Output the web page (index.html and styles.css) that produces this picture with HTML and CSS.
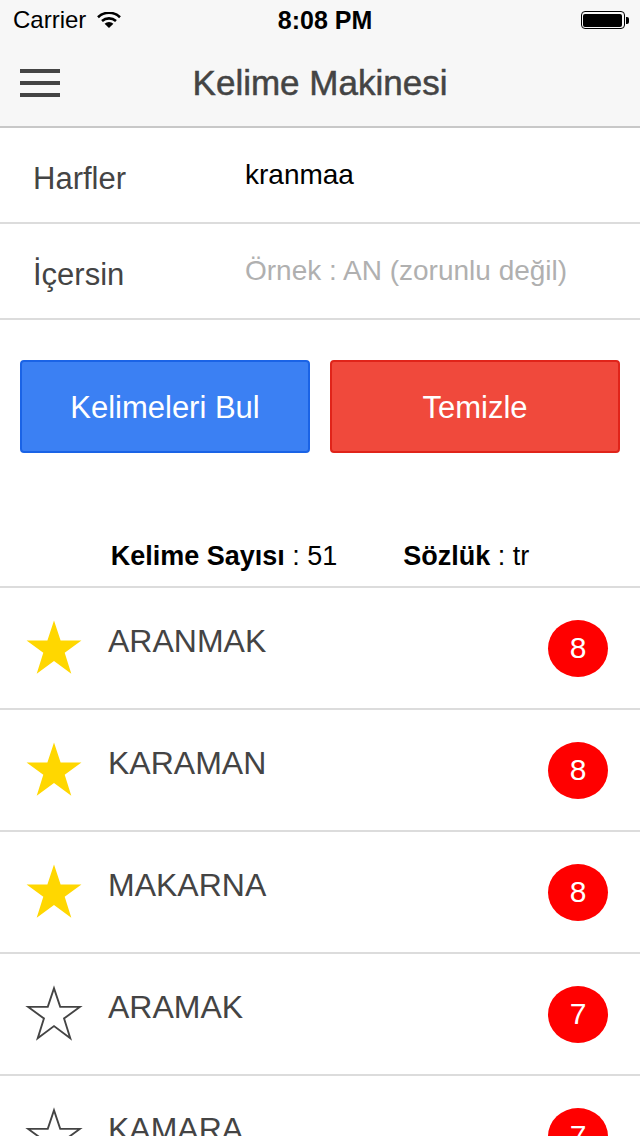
FILE: index.html
```html
<!DOCTYPE html>
<html lang="tr">
<head>
  <meta charset="UTF-8" />
  <meta name="viewport" content="width=device-width, initial-scale=1.0" />
  <title>Kelime Makinesi</title>
  <link rel="stylesheet" href="styles.css">
</head>
<body>
  <div class="statusbar">
    <div class="carrier">
      Carrier
      <svg class="wifi" width="24" height="16" viewBox="0 0 24 16">
        <path d="M1 5.2 A16 16 0 0 1 23 5.2" fill="none" stroke="#000" stroke-width="2.6" />
        <path d="M5 9 A10.5 10.5 0 0 1 19 9" fill="none" stroke="#000" stroke-width="2.6" />
        <path d="M12 16 L7.6 11.8 A6.4 6.4 0 0 1 16.4 11.8 Z" fill="#000" />
      </svg>
    </div>
    <div class="clock">8:08 PM</div>
    <div class="battery">
      <span class="battery-body"><span class="battery-fill"></span></span>
      <span class="battery-tip"></span>
    </div>
  </div>

  <header class="navbar">
    <div class="menu">
      <span></span><span></span><span></span>
    </div>
    <h1 class="title">Kelime Makinesi</h1>
    <div></div>
  </header>

  <form class="search">
    <label class="field">
      <span class="field-label">Harfler</span>
      <input class="field-input" type="text" value="kranmaa">
    </label>
    <label class="field">
      <span class="field-label">İçersin</span>
      <input class="field-input" type="text" placeholder="Örnek : AN (zorunlu değil)">
    </label>

    <div class="actions">
      <button type="button" class="btn btn-find">Kelimeleri Bul</button>
      <button type="button" class="btn btn-clear">Temizle</button>
    </div>
  </form>

  <div class="stats">
    <span><b>Kelime Sayısı</b> : 51</span>
    <span><b>Sözlük</b> : tr</span>
  </div>

  <ul class="words" id="words"></ul>

  <script>
    const words = [
      { word: 'ARANMAK', score: 8, fav: true },
      { word: 'KARAMAN', score: 8, fav: true },
      { word: 'MAKARNA', score: 8, fav: true },
      { word: 'ARAMAK', score: 7, fav: false },
      { word: 'KAMARA', score: 7, fav: false }
    ];
    const list = document.getElementById('words');
    const star = '<svg width="56" height="56" viewBox="0 0 100 100"><polygon points="50,1 61.8,36.5 99,36.5 69.1,58.5 80.9,96 50,73 19.1,96 30.9,58.5 1,36.5 38.2,36.5" /></svg>';

    words.forEach(w => {
      const li = document.createElement('li');
      li.className = 'word';
      li.innerHTML =
        `<span class="star ${w.fav ? 'star-on' : ''}">${star}</span>` +
        `<span class="word-text">${w.word}</span>` +
        `<span class="badge">${w.score}</span>`;
      list.appendChild(li);
    });
  </script>
</body>
</html>
```

FILE: styles.css
```css
body {
  font-family: 'Liberation Sans', Arial, sans-serif;
  background: #fff;
  margin: 0;
  height: 1136px;
  overflow: hidden;
}
.statusbar {
  height: 40px;
  background: #f7f7f7;
  display: flex;
  align-items: center;
  justify-content: space-between;
  padding: 0 11px 0 13px;
  font-size: 24px;
  color: #000;
}
.carrier {
  display: flex;
  align-items: center;
  gap: 11px;
  width: 160px;
}
.clock {
  font-weight: bold;
  font-size: 25px;
  margin-left: 8px;
}
.battery {
  width: 160px;
  display: flex;
  justify-content: flex-end;
  align-items: center;
}
.battery-body {
  width: 44px;
  height: 18px;
  box-sizing: border-box;
  border: 1.5px solid #000;
  border-radius: 4px;
  padding: 1.5px;
  display: flex;
}
.battery-fill {
  flex: 1;
  background: #000;
  border-radius: 2px;
}
.battery-tip {
  width: 3px;
  height: 7px;
  background: #000;
  border-radius: 0 2px 2px 0;
  margin-left: 1px;
}
.navbar {
  height: 86px;
  background: #f7f7f7;
  border-bottom: 2px solid #c8c8c8;
  display: grid;
  grid-template-columns: 120px 1fr 120px;
  align-items: center;
}
.menu {
  display: flex;
  flex-direction: column;
  gap: 8px;
  padding-left: 20px;
}
.menu span {
  display: block;
  width: 40px;
  height: 4px;
  background: #444;
}
.title {
  margin: 0;
  text-align: center;
  font-size: 35px;
  font-weight: normal;
  color: #444;
  -webkit-text-stroke: 0.5px #444;
}
.field {
  display: flex;
  align-items: center;
  height: 94px;
  border-bottom: 2px solid #dcdcdc;
}
.field-label {
  width: 212px;
  padding-left: 33px;
  font-size: 31px;
  color: #444;
  padding-top: 8px;
}
.field-input {
  flex: 1;
  border: none;
  outline: none;
  background: transparent;
  font-family: inherit;
  font-size: 28px;
  color: #000;
  padding: 0;
}
.field-input::placeholder {
  color: #b0b0b0;
}
.actions {
  display: flex;
  gap: 20px;
  padding: 40px 20px 0;
}
.btn {
  flex: 1;
  height: 93px;
  border-radius: 4px;
  font-family: inherit;
  font-size: 31px;
  color: #fff;
  padding-top: 3px;
  cursor: pointer;
}
.btn-find {
  background: #3b80f3;
  border: 2px solid #1a63e6;
}
.btn-clear {
  background: #f0493c;
  border: 2px solid #e0241a;
}
.stats {
  display: flex;
  justify-content: center;
  gap: 66px;
  padding: 83px 0 10px;
  line-height: 40px;
  font-size: 27px;
  color: #000;
  border-bottom: 2px solid #dcdcdc;
}
.words {
  list-style: none;
  margin: 0;
  padding: 0;
}
.word {
  display: flex;
  align-items: center;
  height: 120px;
  border-bottom: 2px solid #dcdcdc;
}
.star {
  display: flex;
  margin-left: 26px;
  width: 56px;
}
.star svg {
  overflow: visible;
}
.star polygon {
  fill: none;
  stroke: #444;
  stroke-width: 3.6;
  transform: scale(0.94);
  transform-origin: 50px 50px;
}
.star-on polygon {
  fill: #ffd700;
  stroke: none;
  transform: none;
}
.word-text {
  flex: 1;
  margin-left: 26px;
  font-size: 32px;
  color: #444;
  padding-bottom: 14px;
}
.badge {
  width: 60px;
  height: 57px;
  margin-right: 32px;
  border-radius: 50%;
  background: #ff0000;
  color: #fff;
  font-size: 30px;
  display: flex;
  align-items: center;
  justify-content: center;
}
```
